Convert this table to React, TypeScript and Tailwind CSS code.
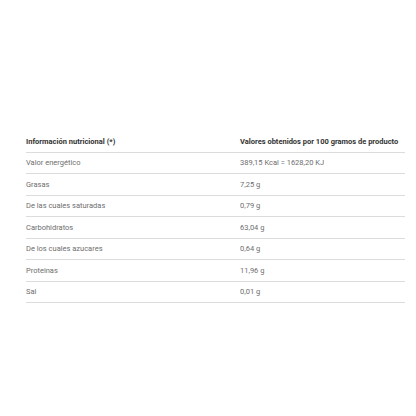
import React from "react";

const rows: [string, string][] = [
  ["Valor energético", "389,15 Kcal = 1628,20 KJ"],
  ["Grasas", "7,25 g"],
  ["De las cuales saturadas", "0,79 g"],
  ["Carbohidratos", "63,04 g"],
  ["De los cuales azucares", "0,64 g"],
  ["Proteinas", "11,96 g"],
  ["Sal", "0,01 g"],
];

const App: React.FC = () => {
  return (
    <div className="w-[416px] h-[416px] bg-white pt-[131px] pl-[26px] font-['Roboto',sans-serif]">
      <div className="w-[379px]">
        <div className="flex items-center h-[21.5px] border-b-[1.5px] border-[#dcdcdc] text-[7.5px] font-bold text-[#333]">
          <div className="w-[214px] shrink-0">Información nutricional (*)</div>
          <div className="whitespace-nowrap">Valores obtenidos por 100 gramos de producto</div>
        </div>
        {rows.map(([label, value]) => (
          <div
            key={label}
            className="flex items-center h-[21.5px] border-b-[1.5px] border-[#dcdcdc] text-[7.5px] text-[#6e6e6e]"
          >
            <div className="w-[214px] shrink-0">{label}</div>
            <div className="whitespace-nowrap">{value}</div>
          </div>
        ))}
      </div>
    </div>
  );
};

export default App;
